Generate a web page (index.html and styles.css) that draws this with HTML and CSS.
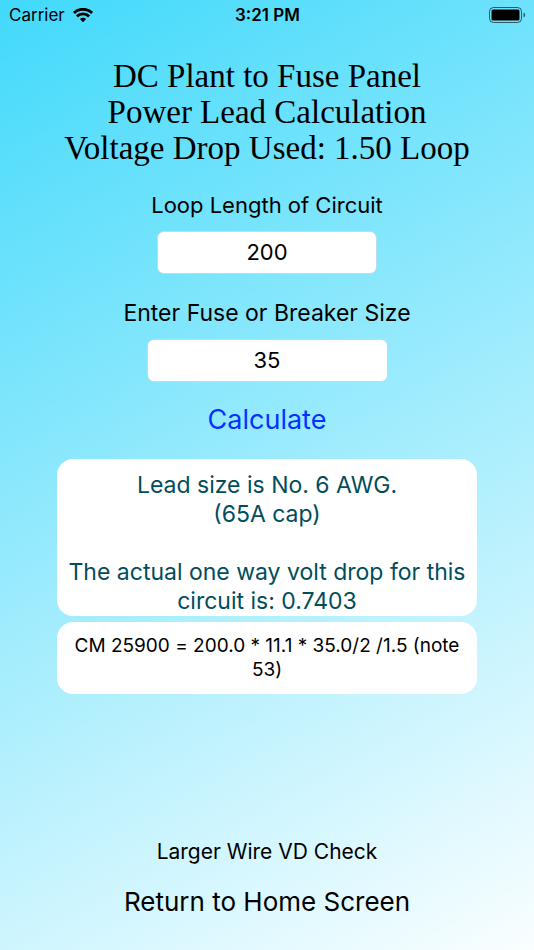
FILE: index.html
```html
<!DOCTYPE html>
<html lang="en">
<head>
<meta charset="utf-8">
<meta name="viewport" content="width=device-width, initial-scale=1">
<title>Power Lead Calculation</title>
<link rel="stylesheet" href="styles.css">
</head>
<body>
<header class="status">
  <div class="carrier"><span>Carrier</span>
    <svg class="wifi" viewBox="0 0 20 15" aria-hidden="true"><path d="M10 14.2 6.9 11.1a4.4 4.4 0 0 1 6.2 0Z"/><path d="M3.9 8.4a8.7 8.7 0 0 1 12.2 0M.9 5a13 13 0 0 1 18.2 0" fill="none" stroke="#000" stroke-width="2.9"/></svg>
  </div>
  <time class="clock">3:21 PM</time>
  <svg class="battery" viewBox="0 0 37 16" aria-label="Battery full"><rect x=".5" y=".5" width="32" height="15" rx="4" fill="none" stroke="#000" stroke-opacity=".6"/><rect x="2.5" y="2.5" width="28" height="11" rx="1.5"/><path d="M34.5 5.5c2.2.8 2.2 4.2 0 5Z" opacity=".6"/></svg>
</header>
<main class="screen">
  <h1 class="title">DC Plant to Fuse Panel<br>Power Lead Calculation<br>Voltage Drop Used: 1.50 Loop</h1>
  <form class="form">
    <label class="label" for="length">Loop Length of Circuit</label>
    <input class="field" id="length" type="text" inputmode="decimal" value="200">
    <label class="label label-large" for="fuse">Enter Fuse or Breaker Size</label>
    <input class="field field-wide" id="fuse" type="text" inputmode="decimal" value="35">
    <button class="calculate" type="button">Calculate</button>
  </form>
  <section class="results">
    <output class="card answer">Lead size is No. 6 AWG.<br>(65A cap)<br><br>The actual one way volt drop for this circuit is: 0.7403</output>
    <output class="card formula">CM 25900 = 200.0 * 11.1 * 35.0/2 /1.5 (note 53)</output>
  </section>
  <nav class="links">
    <a class="check" href="#check">Larger Wire VD Check</a>
    <a class="home" href="#home">Return to Home Screen</a>
  </nav>
</main>
</body>
</html>
```
FILE: styles.css
```css
* { box-sizing: border-box; }
body {
  margin: 0;
  min-height: 100vh;
  display: flex;
  flex-direction: column;
  font-family: Inter, "Liberation Sans", sans-serif;
  color: #000;
  background: linear-gradient(151deg, #41d9fb, #fafeff);
}
.status {
  display: grid;
  grid-template-columns: 1fr auto 1fr;
  align-items: center;
  height: 30px;
  padding: 0 8px 0 9px;
  font-size: 17px;
}
.carrier { display: flex; align-items: center; gap: 8px; }
.wifi { width: 20px; height: 15px; }
.clock { font-weight: 600; }
.battery { width: 37px; height: 16px; justify-self: end; }
.screen {
  flex: 1;
  display: flex;
  flex-direction: column;
  align-items: center;
  padding: 28px 57px 30px;
}
.title {
  margin: 0;
  font: 400 33px/36px "Liberation Serif", serif;
  text-align: center;
  white-space: nowrap;
}
.form { display: flex; flex-direction: column; align-items: center; }
.label { margin-top: 25px; font-size: 22px; line-height: 28px; }
.label-large { font-size: 23px; }
.field {
  width: 220px;
  height: 43px;
  margin-top: 12px;
  padding: 0 0 2px;
  border: 1px solid #b9dfe8;
  border-radius: 7px;
  background: #fff;
  color: #000;
  font: 400 22px/28px Inter, "Liberation Sans", sans-serif;
  text-align: center;
}
.field-wide { width: 241px; }
.calculate {
  margin-top: 20px;
  padding: 0;
  border: 0;
  background: none;
  color: #0433ff;
  font: 400 27px/36px Inter, "Liberation Sans", sans-serif;
}
.results { width: 100%; margin-top: 21px; display: grid; gap: 6px; }
.card { display: block; border-radius: 16px; background: #fff; text-align: center; }
.answer { padding: 12px 8px 0; color: #004d5c; font-size: 23px; line-height: 29px; }
.formula {
  padding: 12px 8px;
  font-size: 19px;
  line-height: 24px;
  font-variant-ligatures: no-contextual;
}
.links { margin-top: auto; display: flex; flex-direction: column; align-items: center; gap: 18px; }
.links a { color: #000; text-decoration: none; }
.check { font-size: 21px; line-height: 28px; }
.home { font-size: 26px; line-height: 36px; }
```
